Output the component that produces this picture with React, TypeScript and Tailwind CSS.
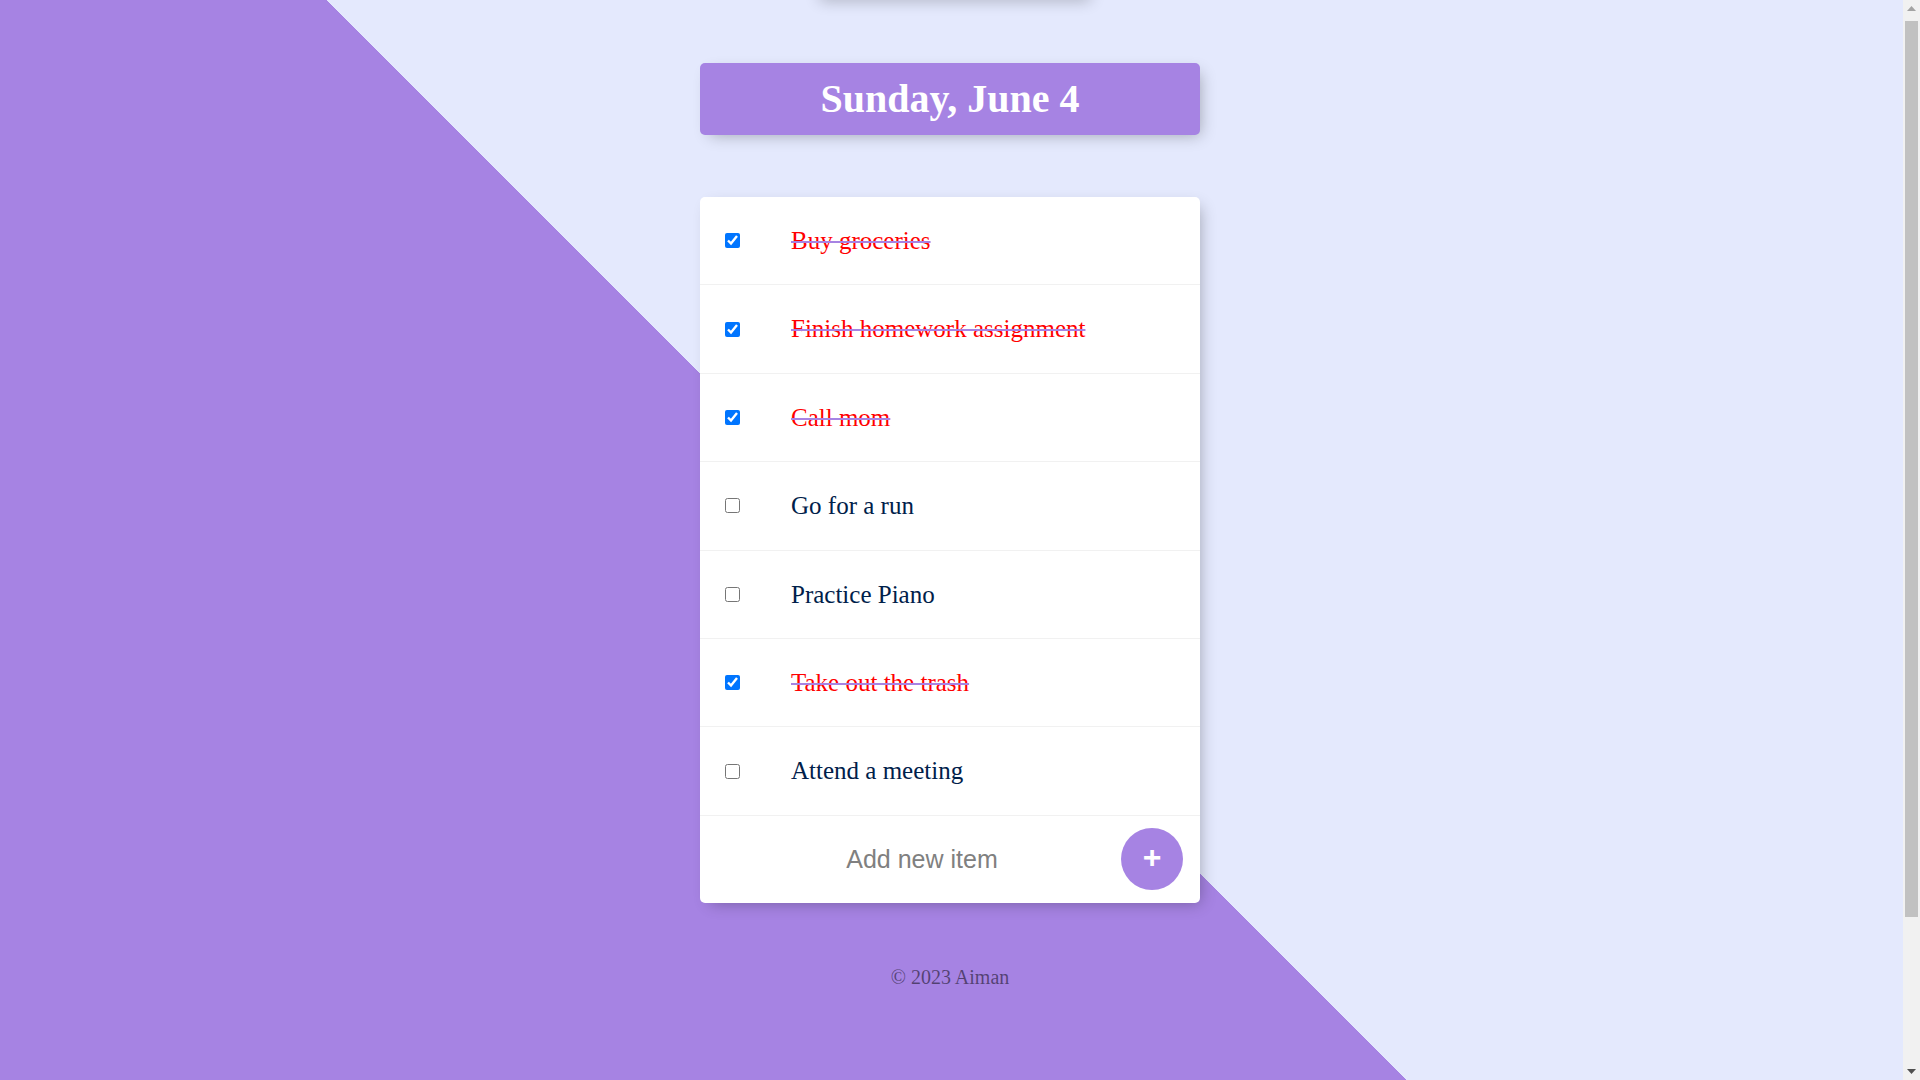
import React from 'react';

const items = [
  { text: 'Buy groceries', done: true },
  { text: 'Finish homework assignment', done: true },
  { text: 'Call mom', done: true },
  { text: 'Go for a run', done: false },
  { text: 'Practice Piano', done: false },
  { text: 'Take out the trash', done: true },
  { text: 'Attend a meeting', done: false },
];

function TodoItem({ text, done }: { text: string; done: boolean }) {
  return (
    <div className="flex h-[88.4px] items-center border-b border-[#f1f1f1]">
      <input
        type="checkbox"
        checked={done}
        readOnly
        className="ml-[25px] h-[15px] w-[15px] shrink-0"
      />
      <p
        className={
          done
            ? 'ml-[51px] text-[25px] text-[red] line-through decoration-[#a683e3] decoration-2'
            : 'ml-[51px] text-[25px] text-[#00204a]'
        }
      >
        {text}
      </p>
    </div>
  );
}

// browser scrollbar as it shows in the screenshot
function Scrollbar() {
  return (
    <div className="flex w-[17px] shrink-0 flex-col bg-[#f1f1f1]">
      <div className="flex h-[17px] items-center justify-center">
        <svg width="9" height="5" viewBox="0 0 9 5">
          <path d="M0 5 L4.5 0 L9 5 Z" fill="#a3a3a3" />
        </svg>
      </div>
      <div className="mx-[2px] mt-[4px] h-[896px] bg-[#c1c1c1]" />
      <div className="flex-1" />
      <div className="flex h-[17px] items-center justify-center">
        <svg width="9" height="5" viewBox="0 0 9 5">
          <path d="M0 0 L9 0 L4.5 5 Z" fill="#505050" />
        </svg>
      </div>
    </div>
  );
}

export default function App() {
  return (
    <div className="flex h-screen overflow-hidden">
      <div className="flex-1 overflow-hidden">
        <div
          className="flex min-h-[1260px] flex-col items-center pr-[3px] bg-[linear-gradient(45deg,#a683e3_50.15%,#e4e9fd_50.15%)]"
          style={{ fontFamily: '"Liberation Serif", "Times New Roman", serif' }}
        >
          {/* leftover box above the viewport, only its shadow shows */}
          <div className="-mt-[20px] h-[20px] w-[280px] shadow-[5px_5px_15px_-5px_rgba(0,0,0,0.3)]" />

          <div className="mt-[63px] w-[500px] rounded-[5px] bg-[#a683e3] shadow-[5px_5px_15px_-5px_rgba(0,0,0,0.3)]">
            <h1 className="py-[10px] text-center text-[40px] font-bold leading-[52px] text-white">
              Sunday, June 4
            </h1>
          </div>

          <div className="mt-[62px] w-[500px] rounded-[5px] bg-white shadow-[5px_5px_15px_-5px_rgba(0,0,0,0.3)]">
            {items.map((item) => (
              <TodoItem key={item.text} text={item.text} done={item.done} />
            ))}
            <div className="flex h-[87px] items-center pl-[20px]">
              <input
                type="text"
                placeholder="Add new item"
                className="h-[60px] w-[404px] bg-transparent text-center text-[25px] font-extralight outline-none placeholder:text-[grey]"
                style={{ fontFamily: '"Liberation Sans", Arial, sans-serif' }}
              />
              <button
                className="-ml-[3px] flex h-[62px] w-[62px] shrink-0 items-center justify-center rounded-full bg-[#a683e3] pb-[4px] text-[32px] font-bold text-white"
                style={{ fontFamily: '"Liberation Sans", Arial, sans-serif' }}
              >
                +
              </button>
            </div>
          </div>

          <footer className="mt-[60px] text-center text-[20px] leading-[28px] text-black/50">
            © 2023 Aiman
          </footer>
        </div>
      </div>
      <Scrollbar />
    </div>
  );
}
